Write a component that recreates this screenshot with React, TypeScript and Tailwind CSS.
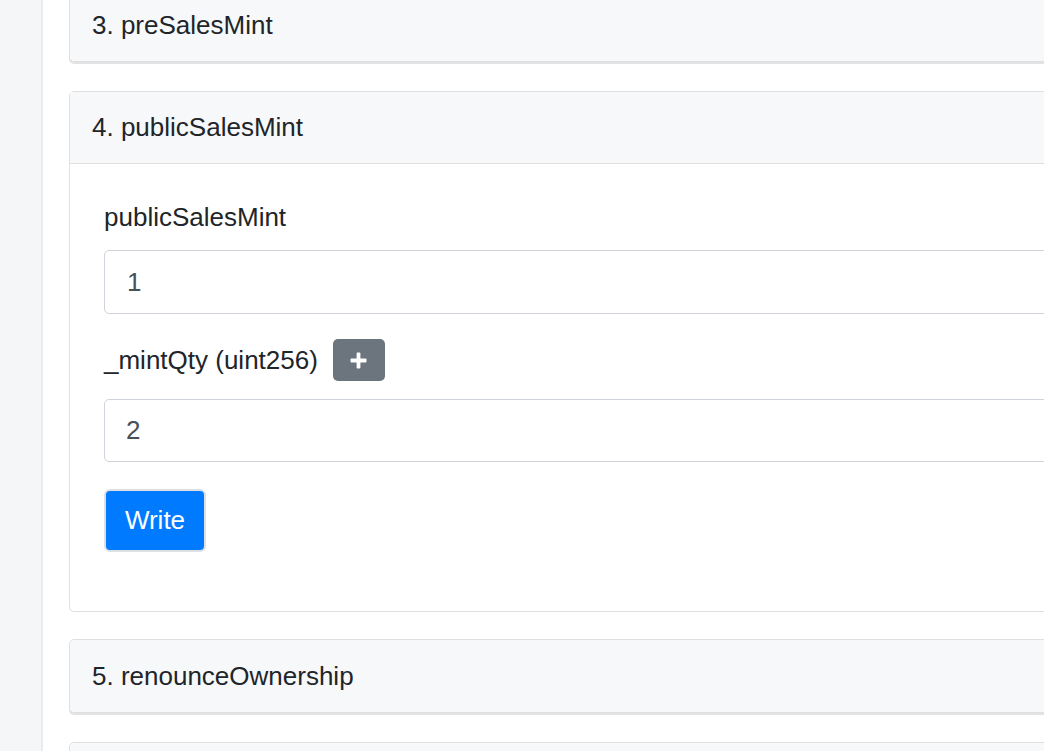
import type { ReactNode } from "react";

const font = { fontFamily: '"Liberation Sans", Arial, sans-serif' };

interface CardProps {
  title?: string,
  open?: boolean,
  className?: string,
  children?: ReactNode
}

const MethodCard = ({ title, open, className, children }: CardProps) => {
  return (
    <div
      className={`rounded-[5px] border border-[#dfdfdf] bg-white ${open ? "" : "shadow-[0_2px_0_#e3e3e3]"} ${className ?? ""}`}
    >
      <div
        className={`flex h-[72px] items-center bg-[#f7f8f9] px-[22px] text-[26px] text-[#212529] ${open ? "border-b border-[#dfdfdf]" : "rounded-[5px]"}`}
      >
        {title}
      </div>
      {open && children}
    </div>
  );
};

const PlusIcon = () => (
  <svg width="17" height="17" viewBox="0 0 17 17">
    <rect x="6.6" y="0.5" width="3.8" height="16" rx="1" fill="white" />
    <rect x="0.5" y="6.6" width="16" height="3.8" rx="1" fill="white" />
  </svg>
);

export default function App() {
  return (
    <div className="flex h-[751px] w-[1044px] overflow-hidden bg-white" style={font}>
      <div className="w-[43px] shrink-0 border-r-2 border-[#e8ebf2] bg-[#f5f6f8]" />
      <div className="flex flex-1 flex-col gap-[27px] pl-[26px] -mr-[80px] -mt-[12px]">
        <MethodCard title="3. preSalesMint" className="mb-[2px]" />

        <MethodCard title="4. publicSalesMint" open>
          <div className="px-[34px] pt-[34px] pb-[59px] text-[26px] text-[#212529]">
            <label className="block leading-[39px]">publicSalesMint</label>
            <input
              defaultValue="1"
              className="mt-[13px] block h-[64px] w-full rounded-[5px] border border-[#ced4da] px-[22px] text-[26px] text-[#495057] outline-none"
            />
            <div className="mt-[25px] flex h-[42px] items-center gap-[15px]">
              <span>_mintQty (uint256)</span>
              <button className="flex h-[42px] w-[52px] items-center justify-center rounded-[5px] bg-[#6c757d]">
                <PlusIcon />
              </button>
            </div>
            <input
              defaultValue="2"
              className="mt-[18px] block h-[63px] w-full rounded-[5px] border border-[#ced4da] px-[21px] text-[26px] text-[#495057] outline-none"
            />
            <button className="mt-[27px] h-[63px] w-[102px] rounded-[6px] border-2 border-[#dcdfe4] bg-[#007bff] text-[26px] text-white">
              Write
            </button>
          </div>
        </MethodCard>

        <MethodCard title="5. renounceOwnership" />
        <MethodCard className="mt-[2px]" />
      </div>
    </div>
  );
}
